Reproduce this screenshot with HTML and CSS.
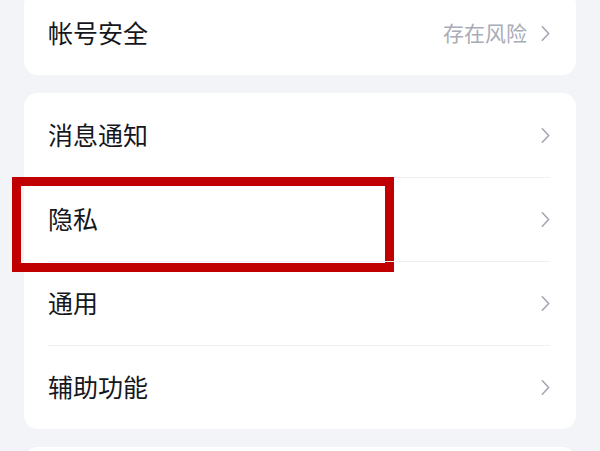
FILE: index.html
```html
<!DOCTYPE html>
<html lang="zh-CN">
<head>
    <meta charset="UTF-8">
    <title>设置</title>
    <link rel="stylesheet" href="styles.css">
</head>
<body>
    <div class="settings">
        <div class="card card-top">
            <div class="row">
                <span class="label">帐号安全</span>
                <span class="value">存在风险</span>
                <svg class="chevron" viewBox="0 0 10 18"><path d="M1.5 1.5 L8.5 9 L1.5 16.5"/></svg>
            </div>
        </div>

        <div class="card">
            <div class="row">
                <span class="label">消息通知</span>
                <svg class="chevron" viewBox="0 0 10 18"><path d="M1.5 1.5 L8.5 9 L1.5 16.5"/></svg>
            </div>
            <div class="row">
                <span class="label">隐私</span>
                <svg class="chevron" viewBox="0 0 10 18"><path d="M1.5 1.5 L8.5 9 L1.5 16.5"/></svg>
                <!-- highlight box -->
                <div class="highlight"></div>
            </div>
            <div class="row">
                <span class="label">通用</span>
                <svg class="chevron" viewBox="0 0 10 18"><path d="M1.5 1.5 L8.5 9 L1.5 16.5"/></svg>
            </div>
            <div class="row">
                <span class="label">辅助功能</span>
                <svg class="chevron" viewBox="0 0 10 18"><path d="M1.5 1.5 L8.5 9 L1.5 16.5"/></svg>
            </div>
        </div>

        <div class="card card-next"></div>
    </div>
</body>
</html>
```

FILE: styles.css
```css
body {
    margin: 0;
    overflow: hidden;
    background-color: #f3f4f8;
    font-family: "Noto Sans CJK SC", "Noto Sans", sans-serif;
}

.settings {
    display: flex;
    flex-direction: column;
    gap: 18px;
    padding: 0 24px;
    margin-top: -9px;
}

.card {
    background-color: #ffffff;
    border-radius: 14px;
    padding: 0 26px 0 24px;
}

.card-next {
    height: 40px;
}

.row {
    position: relative;
    display: flex;
    align-items: center;
    height: 84px;
    padding-bottom: 3px;
    box-sizing: border-box;
}

.row + .row {
    border-top: 1px solid #eeeff3;
}

.label {
    flex: 1;
    font-size: 25px;
    color: #16171c;
}

.value {
    font-size: 21px;
    color: #a9acb6;
    margin-right: 14px;
}

.chevron {
    width: 9px;
    height: 17px;
    margin-top: 3px;
    fill: none;
    stroke: #a3a7b3;
    stroke-width: 1.8;
    stroke-linecap: round;
    stroke-linejoin: round;
}

/* Red box drawn over the privacy row */
.highlight {
    position: absolute;
    left: -36px;
    top: -1px;
    width: 382px;
    height: 95px;
    border: 9px solid #c00000;
    box-sizing: border-box;
}
```
